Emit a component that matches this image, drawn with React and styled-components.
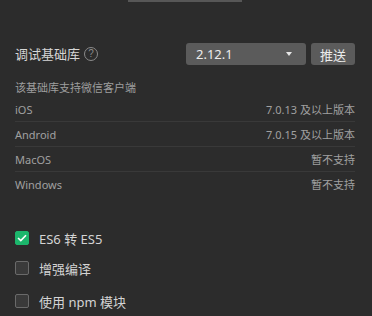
import React from "react";
import styled, { createGlobalStyle } from "styled-components";

const Global = createGlobalStyle`
  html, body { margin: 0; padding: 0; background: #2c2c2c; }
  body { font-family: "Noto Sans", "Noto Sans CJK SC", sans-serif; }
`;

const Page = styled.div`
  width: 372px;
  height: 316px;
  background: #2c2c2c;
  overflow: hidden;
`;

const TopBar = styled.div`
  margin-left: 128px;
  width: 114px;
  height: 2px;
  background: #575757;
`;

const Panel = styled.div`
  padding: 0 17px 0 15px;
`;

const Header = styled.div`
  margin-top: 41px;
  height: 22px;
  display: flex;
  align-items: center;
  justify-content: space-between;
`;

const Title = styled.div`
  display: flex;
  align-items: center;
  gap: 4px;
  font-size: 13px;
  color: #d6d6d6;
  line-height: 22px;
`;

const Help = styled.span`
  width: 12px;
  height: 12px;
  border: 1px solid #8a8a8a;
  border-radius: 50%;
  color: #8a8a8a;
  font-size: 10px;
  line-height: 12px;
  text-align: center;
  font-family: "Liberation Sans", sans-serif;
`;

const Controls = styled.div`
  display: flex;
  gap: 5px;
`;

const Select = styled.div`
  width: 120px;
  height: 22px;
  box-sizing: border-box;
  padding: 0 14px 0 10px;
  background: #5b5b5b;
  border-radius: 3px;
  display: flex;
  align-items: center;
  justify-content: space-between;
  color: #ececec;
  font-size: 13px;
`;

const Arrow = styled.span`
  width: 0;
  height: 0;
  border-left: 3px solid transparent;
  border-right: 3px solid transparent;
  border-top: 4px solid #e6e6e6;
`;

const Button = styled.div`
  width: 44px;
  height: 22px;
  background: #5b5b5b;
  border-radius: 3px;
  display: flex;
  align-items: center;
  justify-content: center;
  color: #ececec;
  font-size: 13px;
`;

const Sub = styled.div`
  margin-top: 15px;
  font-size: 11px;
  line-height: 16px;
  color: #9e9e9e;
`;

const Rows = styled.div`
  margin-top: 1px;
`;

const Row = styled.div`
  height: 24px;
  display: flex;
  align-items: center;
  justify-content: space-between;
  font-size: 11px;
  color: #a0a0a0;
  border-bottom: 1px solid ${(p) => (p.$last ? "transparent" : "#393939")};
`;

const Checks = styled.div`
  margin-top: 34px;
`;

const CheckItem = styled.div`
  display: flex;
  align-items: center;
  gap: 10px;
  height: 14px;
  margin-top: ${(p) => p.$mt || 0}px;
  font-size: 13px;
  color: #d4d4d4;
`;

const Box = styled.span`
  width: 14px;
  height: 14px;
  box-sizing: border-box;
  border-radius: 2px;
  display: flex;
  align-items: center;
  justify-content: center;
  background: ${(p) => (p.$on ? "#1cb66c" : "#3a3a3a")};
  border: 1px solid ${(p) => (p.$on ? "#1cb66c" : "#6a6a6a")};
`;

const rows = [
  ["iOS", "7.0.13 及以上版本"],
  ["Android", "7.0.15 及以上版本"],
  ["MacOS", "暂不支持"],
  ["Windows", "暂不支持"],
];

const checks = [
  { label: "ES6 转 ES5", on: true, mt: 0 },
  { label: "增强编译", on: false, mt: 16 },
  { label: "使用 npm 模块", on: false, mt: 19 },
];

export default function App() {
  return (
    <Page>
      <Global />
      <TopBar />
      <Panel>
        <Header>
          <Title>
            调试基础库<Help>?</Help>
          </Title>
          <Controls>
            <Select>
              <span>2.12.1</span>
              <Arrow />
            </Select>
            <Button>推送</Button>
          </Controls>
        </Header>
        <Sub>该基础库支持微信客户端</Sub>
        <Rows>
          {rows.map(([a, b], i) => (
            <Row key={a} $last={i === rows.length - 1}>
              <span>{a}</span>
              <span>{b}</span>
            </Row>
          ))}
        </Rows>
        <Checks>
          {checks.map((c) => (
            <CheckItem key={c.label} $mt={c.mt}>
              <Box $on={c.on}>
                {c.on && (
                  <svg width="10" height="8" viewBox="0 0 10 8">
                    <path d="M1 4 L3.8 6.6 L9 1.2" fill="none" stroke="#fff" strokeWidth="1.6" />
                  </svg>
                )}
              </Box>
              <span>{c.label}</span>
            </CheckItem>
          ))}
        </Checks>
      </Panel>
    </Page>
  );
}
